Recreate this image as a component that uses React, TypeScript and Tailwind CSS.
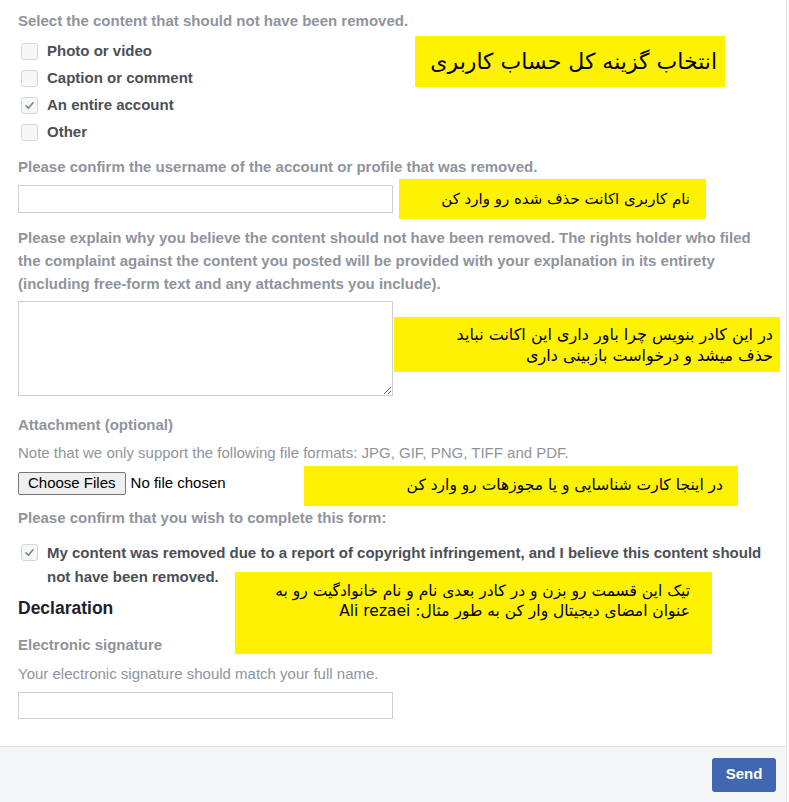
import React from 'react';

const Box: React.FC<{ checked?: boolean }> = ({ checked }) => (
  <span className="flex h-[17px] w-[17px] shrink-0 items-center justify-center rounded-[3px] border border-[#d3d6db] bg-[#f6f7f9]">
    {checked && (
      <svg width="11" height="11" viewBox="0 0 12 12" fill="none">
        <path d="M2.2 6.4 4.8 9 9.8 3" stroke="#7f8389" strokeWidth="1.8" strokeLinecap="round" strokeLinejoin="round" />
      </svg>
    )}
  </span>
);

const Note: React.FC<{ className: string; children: React.ReactNode }> = ({ className, children }) => (
  <div
    dir="rtl"
    className={`absolute bg-[#fff200] text-black font-['DejaVu_Sans',sans-serif] ${className}`}
  >
    {children}
  </div>
);

export default function App() {
  return (
    <div className="relative h-[802px] w-[789px] overflow-hidden bg-white font-['Liberation_Sans',Arial,sans-serif]">
      <div className="border-r border-[#dddfe2] h-full w-[787px] flex flex-col">
        <div className="flex-1 px-[18px] pt-[12px]">
          <p className="text-[15px] font-bold text-[#90949c] leading-[18px]">Select the content that should not have been removed.</p>
          <div className="mt-[8px] flex flex-col">
            {[
              ['Photo or video', false],
              ['Caption or comment', false],
              ['An entire account', true],
              ['Other', false],
            ].map(([label, c]) => (
              <label key={label as string} className="flex h-[27px] items-center gap-[9px] pl-[3px]">
                <Box checked={c as boolean} />
                <span className="text-[15px] font-bold text-[#4b4f56]">{label as string}</span>
              </label>
            ))}
          </div>

          <p className="mt-[12px] text-[15px] font-bold text-[#90949c] leading-[18px]">
            Please confirm the username of the account or profile that was removed.
          </p>
          <input className="mt-[9px] block h-[28px] w-[375px] border border-[#ccd0d5] bg-white" />

          <p className="mt-[13px] max-w-[742px] text-[15px] font-bold text-[#90949c] leading-[23px]">
            Please explain why you believe the content should not have been removed. The rights holder who filed the complaint against the content you posted will be provided with your explanation in its entirety (including free-form text and any attachments you include).
          </p>
          <textarea className="mt-[6px] block h-[95px] w-[375px] border border-[#ccd0d5] bg-white" />

          <p className="mt-[20px] text-[15px] font-bold text-[#90949c] leading-[18px]">Attachment (optional)</p>
          <p className="mt-[10px] text-[15px] text-[#90949c] leading-[18px]">
            Note that we only support the following file formats: JPG, GIF, PNG, TIFF and PDF.
          </p>
          <div className="mt-[10px] flex items-center gap-[5px]">
            <span className="rounded-[2px] border border-[#767676] bg-[#efefef] px-[9px] h-[23px] flex items-center text-[15px] text-black">Choose Files</span>
            <span className="text-[15px] text-black">No file chosen</span>
          </div>

          <p className="mt-[14px] text-[15px] font-bold text-[#90949c] leading-[18px]">Please confirm that you wish to complete this form:</p>
          <label className="mt-[14px] flex gap-[9px] pl-[3px]">
            <span className="pt-[3px]"><Box checked /></span>
            <span className="text-[15px] font-bold text-[#4b4f56] leading-[24px]">
              My content was removed due to a report of copyright infringement, and I believe this content should not have been removed.
            </span>
          </label>

          <h3 className="mt-[8px] text-[17.5px] font-bold text-[#1d2129] leading-[22px]">Declaration</h3>
          <p className="mt-[17px] text-[15px] font-bold text-[#90949c] leading-[18px]">Electronic signature</p>
          <p className="mt-[11px] text-[15px] text-[#90949c] leading-[18px]">Your electronic signature should match your full name.</p>
          <input className="mt-[9px] block h-[27px] w-[375px] border border-[#ccd0d5] bg-white" />
        </div>
        <div className="flex h-[56px] items-center justify-end border-t border-[#dddfe2] bg-[#f5f6f7] pr-[10px]">
          <button className="h-[34px] w-[64px] rounded-[3px] bg-[#4267b2] text-[15px] font-bold text-white">Send</button>
        </div>
      </div>

      <Note className="left-[415px] top-[36px] w-[310px] h-[51px] flex items-center pr-[8px] text-[22px]">انتخاب گزینه کل حساب کاربری</Note>
      <Note className="left-[399px] top-[179px] w-[307px] h-[40px] flex items-center pr-[16px] text-[15px]">نام کاربری اکانت حذف شده رو وارد کن</Note>
      <Note className="left-[394px] top-[317px] w-[386px] h-[55px] flex flex-col justify-center pr-[7px] text-[16px] leading-[21px]">
        <span>در این کادر بنویس چرا باور داری این اکانت نباید</span>
        <span>حذف میشد و درخواست بازبینی داری</span>
      </Note>
      <Note className="left-[304px] top-[466px] w-[434px] h-[40px] flex items-center pr-[15px] text-[15.5px]">در اینجا کارت شناسایی و یا مجوزهات رو وارد کن</Note>
      <Note className="left-[235px] top-[572px] w-[477px] h-[82px] pt-[9px] pr-[22px] text-[15.5px] leading-[20px]">
        <div>تیک این قسمت رو بزن و در کادر بعدی نام و نام خانوادگیت رو به</div>
        <div>عنوان امضای دیجیتال وار کن به طور مثال: Ali rezaei</div>
      </Note>
    </div>
  );
}
